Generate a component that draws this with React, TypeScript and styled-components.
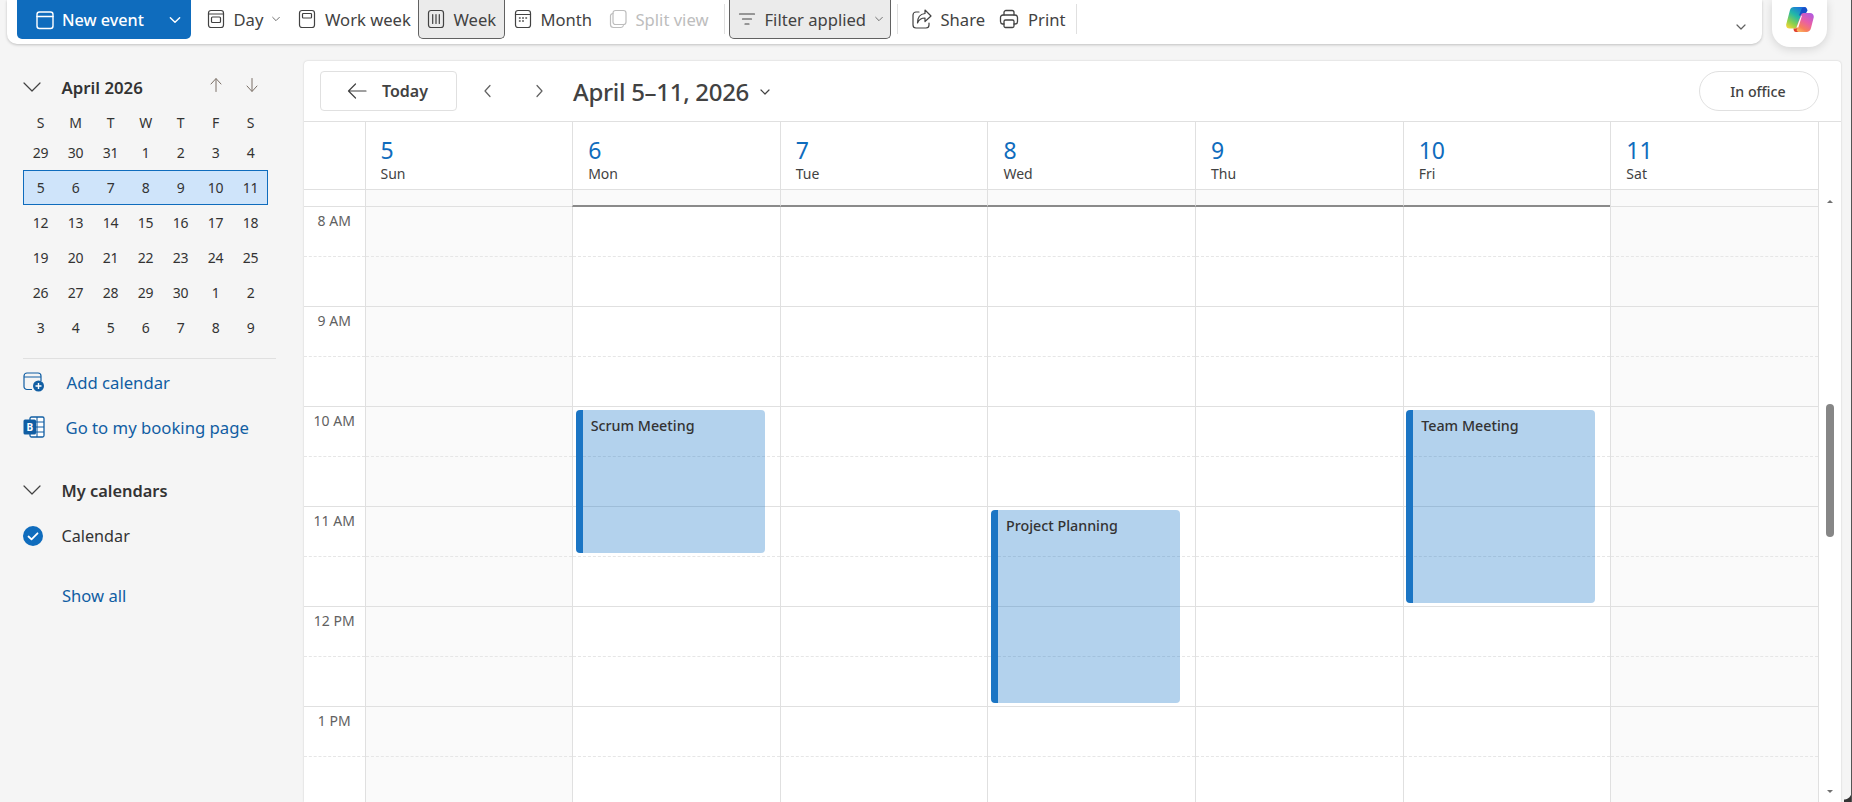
import React from "react";
import styled, { createGlobalStyle } from "styled-components";

const GlobalStyle = createGlobalStyle`
  html, body {
    margin: 0;
    height: 100%;
    overflow: hidden;
  }
  body {
    font-family: "Noto Sans", "Open Sans", sans-serif;
    color: #242424;
  }
  * {
    box-sizing: border-box;
  }
`;

type IconProps = { size?: number };

const stroke = { fill: "none", stroke: "currentColor", strokeWidth: 1.2, strokeLinecap: "round", strokeLinejoin: "round" } as const;

const ChevronDown = ({ size = 12 }: IconProps) => (
  <svg width={size} height={size} viewBox="0 0 12 12" {...stroke}>
    <path d="M2 4l4 4 4-4" />
  </svg>
);
const ChevronLeft = () => (
  <svg width="12" height="16" viewBox="0 0 12 16" {...stroke}>
    <path d="M8 2.5L3 8l5 5.5" />
  </svg>
);
const ChevronRight = () => (
  <svg width="12" height="16" viewBox="0 0 12 16" {...stroke}>
    <path d="M4 2.5L9 8l-5 5.5" />
  </svg>
);
const CalendarIcon = () => (
  <svg width="20" height="20" viewBox="0 0 20 20" {...stroke} strokeWidth={1.4}>
    <rect x="2" y="2" width="16" height="16.5" rx="2.5" />
    <path d="M2 6.5h16" />
  </svg>
);
const DayIcon = () => (
  <svg width="20" height="20" viewBox="0 0 20 20" {...stroke}>
    <rect x="2.5" y="1.5" width="15" height="17" rx="2.5" />
    <path d="M2.5 5h15" />
    <rect x="5.5" y="8" width="9" height="5.5" rx="1" />
  </svg>
);
const WorkWeekIcon = () => (
  <svg width="20" height="20" viewBox="0 0 20 20" {...stroke}>
    <rect x="2.5" y="1.5" width="15" height="17" rx="2.5" />
    <rect x="5.5" y="4.5" width="9" height="4.5" rx="0.8" />
  </svg>
);
const WeekIcon = () => (
  <svg width="20" height="20" viewBox="0 0 20 20" {...stroke}>
    <rect x="2.5" y="1.5" width="15" height="17" rx="2.5" />
    <path d="M6.7 5.5v9M10 5.5v9M13.3 5.5v9" />
  </svg>
);
const MonthIcon = () => (
  <svg width="20" height="20" viewBox="0 0 20 20" {...stroke}>
    <rect x="2.5" y="1.5" width="15" height="17" rx="2.5" />
    <path d="M2.5 5.5h15" />
    <path d="M6.5 9h.6M9.7 9h.6M12.9 9h.6M6.5 12h.6M9.7 12h.6" strokeWidth={1.5} />
  </svg>
);
const SplitIcon = () => (
  <svg width="20" height="20" viewBox="0 0 20 20" {...stroke}>
    <rect x="5" y="1.5" width="13" height="14" rx="2.5" />
    <path d="M5 4.5A2.5 2.5 0 0 0 2.5 7v8.5a3 3 0 0 0 3 3H13a2.5 2.5 0 0 0 2.4-2" />
  </svg>
);
const FilterIcon = () => (
  <svg width="20" height="20" viewBox="0 0 20 20" {...stroke}>
    <path d="M2.5 5h15M5.5 10h9M8 15h4" />
  </svg>
);
const ShareIcon = () => (
  <svg width="22" height="22" viewBox="0 0 22 22" {...stroke}>
    <path d="M8 4H5a3 3 0 0 0-3 3v10a3 3 0 0 0 3 3h10a3 3 0 0 0 3-3v-2" />
    <path d="M14 2l6 6-6 5.500V10c-3.500 0-6 1.500-7.500 5 0-5.500 3-9 7.500-9.500z" />
  </svg>
);
const PrintIcon = () => (
  <svg width="22" height="22" viewBox="0 0 22 22" {...stroke} strokeWidth={1.3}>
    <path d="M6 7V4.500A2 2 0 0 1 8 2.500h6a2 2 0 0 1 2 2V7" />
    <path d="M6 16H4.500a2.500 2.500 0 0 1-2-2.500V9.500A2.500 2.500 0 0 1 5 7h12a2.500 2.500 0 0 1 2.500 2.500v4A2.500 2.500 0 0 1 17 16h-1" />
    <rect x="6" y="12" width="10" height="7.500" rx="1.500" />
  </svg>
);
const ArrowUp = () => (
  <svg width="14" height="16" viewBox="0 0 14 16" {...stroke} strokeWidth={1}>
    <path d="M7 14.500V2M2 7l5-5.500L12 7" />
  </svg>
);
const ArrowDown = () => (
  <svg width="14" height="16" viewBox="0 0 14 16" {...stroke} strokeWidth={1}>
    <path d="M7 1.500V14M2 9l5 5.500L12 9" />
  </svg>
);
const ArrowLeft = () => (
  <svg width="20" height="16" viewBox="0 0 20 16" {...stroke}>
    <path d="M19 8H1.500M8.500 1L1.500 8l7 7" />
  </svg>
);
const LargeChevron = () => (
  <svg width="18" height="10" viewBox="0 0 18 10" {...stroke}>
    <path d="M1 1l8 8 8-8" />
  </svg>
);
const AddCalendarIcon = () => (
  <svg width="22" height="20" viewBox="0 0 22 20">
    <path d="M9 17.500H4a3 3 0 0 1-3-3V4a3 3 0 0 1 3-3h11a3 3 0 0 1 3 3v5M1 5h17" fill="none" stroke="#115ea3" strokeWidth="1.2" />
    <circle cx="15.500" cy="14" r="5.500" fill="#115ea3" />
    <path d="M15.500 11v6M12.500 14h6" stroke="#fff" strokeWidth="1.400" />
  </svg>
);
const BookingIcon = () => (
  <svg width="22" height="22" viewBox="0 0 22 22">
    <rect x="7" y="1" width="14" height="20" rx="1.500" fill="#fff" stroke="#115ea3" strokeWidth="1.300" />
    <path d="M14 1v20M7 6h14M7 11h14M7 16h14" stroke="#115ea3" strokeWidth="1.100" />
    <rect x="0.500" y="3.500" width="12.500" height="15" rx="1.500" fill="#115ea3" />
    <text x="3.500" y="15" fontSize="10" fontWeight="700" fill="#fff" fontFamily="Noto Sans, sans-serif">B</text>
  </svg>
);
const CheckCircle = () => (
  <svg width="20" height="20" viewBox="0 0 20 20">
    <circle cx="10" cy="10" r="10" fill="#0f6cbd" />
    <path d="M5.500 10.500l3 2.800 6-6" fill="none" stroke="#fff" strokeWidth="1.800" strokeLinecap="round" strokeLinejoin="round" />
  </svg>
);
const CopilotLogo = () => (
  <svg width="28" height="27" viewBox="0 0 28 27">
    <defs>
      <linearGradient id="cpLeft" x1="0.75" y1="0" x2="0.15" y2="1">
        <stop offset="0" stopColor="#1a6fe0" />
        <stop offset="0.4" stopColor="#22b8a8" />
        <stop offset="0.75" stopColor="#8fd14a" />
        <stop offset="1" stopColor="#f2d43a" />
      </linearGradient>
      <linearGradient id="cpRight" x1="0.85" y1="0" x2="0.25" y2="1">
        <stop offset="0" stopColor="#b05ae0" />
        <stop offset="0.45" stopColor="#e85ea8" />
        <stop offset="0.8" stopColor="#f8805a" />
        <stop offset="1" stopColor="#fbb45e" />
      </linearGradient>
    </defs>
    <path d="M8 1h9c2 0 3 1.500 2 3.500L13.500 20c-.7 2-2 2.500-4 2.500H3.500C1 22.500-.300 20.500.300 18L4 4C4.500 2 6 1 8 1z" fill="url(#cpLeft)" />
    <path d="M13 9.500l2-5c.800-2 1.500-3.500 4-3.500 1 0 2 1.500 2.500 3.500L19 9z" fill="#1650c8" />
    <path d="M17.500 7h6.500c2.500 0 4.200 2 3.700 4.500L25 22c-.500 2.500-2.500 4-4.500 4h-8c-2.500 0-3.500-1.500-2.700-3.500L15 9c.400-1.300 1.300-2 2.500-2z" fill="url(#cpRight)" />
    <path d="M10 26c-1.500 0-2.500-1-2.500-3.500h4L10.500 24c.500 1.500 2 2 2.500 2z" fill="#e0402e" />
    <path d="M16 9.500l-1 .500-4.500 11.500h1.800z" fill="#fff" />
  </svg>
);

const miniWeeks = [
  [29, 30, 31, 1, 2, 3, 4],
  [5, 6, 7, 8, 9, 10, 11],
  [12, 13, 14, 15, 16, 17, 18],
  [19, 20, 21, 22, 23, 24, 25],
  [26, 27, 28, 29, 30, 1, 2],
  [3, 4, 5, 6, 7, 8, 9],
];

const days = [
  { num: 5, name: "Sun", weekend: true, events: [] },
  { num: 6, name: "Mon", weekend: false, events: [{ title: "Scrum Meeting", top: 203, height: 143 }] },
  { num: 7, name: "Tue", weekend: false, events: [] },
  { num: 8, name: "Wed", weekend: false, events: [{ title: "Project Planning", top: 303, height: 193 }] },
  { num: 9, name: "Thu", weekend: false, events: [] },
  { num: 10, name: "Fri", weekend: false, events: [{ title: "Team Meeting", top: 203, height: 193 }] },
  { num: 11, name: "Sat", weekend: true, events: [] },
];

const hours = ["8 AM", "9 AM", "10 AM", "11 AM", "12 PM", "1 PM"];

const App = () => {
  return (
    <Page>
      <GlobalStyle />
      <TopRow>
        <Toolbar>
          <NewEvent>
            <CalendarIcon />
            <NewEventLabel>New event</NewEventLabel>
            <ChevronDown size={14} />
          </NewEvent>
          <ToolButton $width={91.5} $ml={7}>
            <DayIcon /> Day <SmallChevron><ChevronDown size={10} /></SmallChevron>
          </ToolButton>
          <ToolButton $width={128.5}>
            <WorkWeekIcon /> Work week
          </ToolButton>
          <ToolButton $width={87} $active>
            <WeekIcon /> Week
          </ToolButton>
          <ToolButton $width={95}>
            <MonthIcon /> Month
          </ToolButton>
          <ToolButton $width={121} $disabled>
            <SplitIcon /> Split view
          </ToolButton>
          <Separator />
          <ToolButton $width={161.5} $ml={1} $active>
            <FilterIcon /> Filter applied <SmallChevron><ChevronDown size={10} /></SmallChevron>
          </ToolButton>
          <Separator $ml={6} />
          <ToolButton $width={87.5} $ml={2.5}>
            <ShareIcon /> Share
          </ToolButton>
          <ToolButton $width={82}>
            <PrintIcon /> Print
          </ToolButton>
          <Separator />
          <Overflow>
            <ChevronDown size={12} />
          </Overflow>
        </Toolbar>
        <CopilotButton>
          <CopilotLogo />
        </CopilotButton>
      </TopRow>

      <Main>
        <Sidebar>
          <MonthHead>
            <ChevronSlot>
              <LargeChevron />
            </ChevronSlot>
            <MonthTitle>April 2026</MonthTitle>
            <MonthArrows>
              <ArrowUp />
              <ArrowDown />
            </MonthArrows>
          </MonthHead>
          <MiniWeek $head>
            {["S", "M", "T", "W", "T", "F", "S"].map((d, i) => (
              <MiniCell key={i}>{d}</MiniCell>
            ))}
          </MiniWeek>
          {miniWeeks.map((week, i) => (
            <MiniWeek key={i} $selected={i === 1}>
              {week.map((d, j) => (
                <MiniCell key={j}>{d}</MiniCell>
              ))}
            </MiniWeek>
          ))}
          <Divider />
          <SideLink>
            <LinkIcon>
              <AddCalendarIcon />
            </LinkIcon>
            Add calendar
          </SideLink>
          <SideLink $mt={9} $iconWidth={42.5}>
            <LinkIcon>
              <BookingIcon />
            </LinkIcon>
            Go to my booking page
          </SideLink>
          <GroupHead>
            <ChevronSlot>
              <LargeChevron />
            </ChevronSlot>
            My calendars
          </GroupHead>
          <CalendarRow>
            <ChevronSlot>
              <CheckCircle />
            </ChevronSlot>
            Calendar
          </CalendarRow>
          <ShowAll>Show all</ShowAll>
        </Sidebar>

        <Panel>
          <PanelHead>
            <TodayButton>
              <ArrowLeft />
              Today
            </TodayButton>
            <NavButton $ml={25}>
              <ChevronLeft />
            </NavButton>
            <NavButton $ml={39}>
              <ChevronRight />
            </NavButton>
            <RangeTitle>April 5–11, 2026</RangeTitle>
            <RangeChevron>
              <ChevronDown size={12} />
            </RangeChevron>
            <OfficeButton>In office</OfficeButton>
          </PanelHead>
          <PanelBody>
            <Grid>
              <DayHeadRow>
                <TimeHead />
                {days.map((d) => (
                  <DayHead key={d.num}>
                    <DayNumber>{d.num}</DayNumber>
                    <DayName>{d.name}</DayName>
                  </DayHead>
                ))}
              </DayHeadRow>
              <StripRow>
                <StripTime />
                {days.map((d) => (
                  <StripCell key={d.num} $weekend={d.weekend} />
                ))}
              </StripRow>
              <HoursRow>
                <TimeColumn>
                  {hours.map((h) => (
                    <HourCell key={h}>
                      <HalfHour>
                        <TimeLabel>{h}</TimeLabel>
                      </HalfHour>
                    </HourCell>
                  ))}
                </TimeColumn>
                {days.map((d) => (
                  <DayColumn key={d.num} $weekend={d.weekend}>
                    {hours.map((h) => (
                      <HourCell key={h}>
                        <HalfHour />
                      </HourCell>
                    ))}
                    {d.events.map((e) => (
                      <EventCard key={e.title} $top={e.top} $height={e.height}>
                        {e.title}
                      </EventCard>
                    ))}
                  </DayColumn>
                ))}
              </HoursRow>
            </Grid>
            <ScrollRail>
              <RailArrow $up />
              <ScrollThumb />
              <RailArrow />
            </ScrollRail>
          </PanelBody>
        </Panel>
      </Main>
      <WindowCorner />
    </Page>
  );
};

const Page = styled.div`
  position: relative;
  display: flex;
  flex-direction: column;
  height: 100vh;
  background: #f5f5f5;
  border-right: 1px solid #555;
  overflow: hidden;
`;
const WindowCorner = styled.div`
  position: absolute;
  right: -1px;
  bottom: 0;
  width: 8px;
  height: 10px;
  background: radial-gradient(circle at 0 0, transparent 7px, #333 8px);
`;
const TopRow = styled.div`
  display: flex;
  align-items: flex-start;
  height: 44px;
  padding-left: 7px;
  flex: none;
`;
const Toolbar = styled.div`
  display: flex;
  align-items: flex-start;
  width: 1755px;
  height: 44px;
  padding-left: 10px;
  background: #fff;
  border-radius: 0 0 10px 10px;
  box-shadow: 0 1px 3px rgba(0, 0, 0, 0.22);
  color: #424242;
`;
const NewEvent = styled.button`
  display: flex;
  align-items: center;
  width: 174px;
  height: 39px;
  padding: 0 9px 0 18px;
  border: none;
  border-radius: 0 0 5px 5px;
  background: #0f6cbd;
  color: #fff;
  font: 500 16.2px "Noto Sans", sans-serif;
`;
const NewEventLabel = styled.span`
  margin: 0 auto 0 7px;
`;
const ToolButton = styled.div<{ $width: number; $active?: boolean; $disabled?: boolean; $ml?: number }>`
  display: flex;
  align-items: center;
  gap: 8px;
  flex: none;
  width: ${(p) => p.$width}px;
  height: 39px;
  margin-left: ${(p) => p.$ml ?? 0}px;
  padding-left: 6.5px;
  font-size: 16.6px;
  white-space: nowrap;
  color: ${(p) => (p.$disabled ? "#bdbdbd" : "#424242")};
  background: ${(p) => (p.$active ? "#ebebeb" : "transparent")};
  border: 1px solid ${(p) => (p.$active ? "#616161" : "transparent")};
  border-top: none;
  border-radius: 0 0 5px 5px;
  svg {
    flex: none;
  }
`;
const SmallChevron = styled.span`
  display: flex;
  color: #707070;
`;
const Separator = styled.div<{ $ml?: number }>`
  flex: none;
  width: 1px;
  height: 30px;
  margin: 4px 3px 0 ${(p) => p.$ml ?? 3}px;
  background: #e0e0e0;
`;
const Overflow = styled.div`
  display: flex;
  margin: 21px 15px 0 auto;
  color: #616161;
`;
const CopilotButton = styled.div`
  display: flex;
  align-items: center;
  justify-content: center;
  flex: none;
  width: 55px;
  height: 47px;
  margin-left: 10px;
  padding: 6px 0 14px;
  background: #fff;
  border-radius: 0 0 18px 18px;
  box-shadow: 0 2px 10px rgba(0, 0, 0, 0.14);
`;
const Main = styled.div`
  display: flex;
  flex: 1;
  min-height: 0;
  padding-right: 10px;
`;
const Sidebar = styled.div`
  display: flex;
  flex-direction: column;
  flex: none;
  width: 304px;
  padding: 28px 0 0 23px;
  font-size: 14px;
  color: #333;
`;
const MonthHead = styled.div`
  display: flex;
  align-items: center;
  height: 30px;
  margin-bottom: 7px;
`;
const ChevronSlot = styled.div`
  display: flex;
  flex: none;
  width: 38.5px;
  color: #424242;
`;
const MonthTitle = styled.div`
  font-size: 16.8px;
  font-weight: 600;
  color: #333;
`;
const MonthArrows = styled.div`
  display: flex;
  gap: 22px;
  margin: -4px 0 0 66px;
  color: #7a6f66;
`;
const MiniWeek = styled.div<{ $selected?: boolean; $head?: boolean }>`
  display: grid;
  grid-template-columns: repeat(7, 35px);
  width: 245px;
  height: ${(p) => (p.$head ? "26px" : "35px")};
  background: ${(p) => (p.$selected ? "#cfe4fa" : "transparent")};
  outline: ${(p) => (p.$selected ? "1px solid #0f6cbd" : "none")};
  outline-offset: -1px;
`;
const MiniCell = styled.div`
  display: flex;
  align-items: center;
  justify-content: center;
  font-size: 14px;
  letter-spacing: -0.3px;
`;
const Divider = styled.div`
  width: 253px;
  height: 1px;
  margin-top: 13px;
  background: #e0e0e0;
`;
const LinkIcon = styled.div`
  display: flex;
  flex: none;
  width: 43.5px;
`;
const SideLink = styled.div<{ $mt?: number; $iconWidth?: number }>`
  display: flex;
  align-items: center;
  height: 36px;
  margin-top: ${(p) => p.$mt ?? 5}px;
  font-size: 16.7px;
  color: #115ea3;
  ${LinkIcon} {
    width: ${(p) => p.$iconWidth ?? 43.5}px;
  }
`;
const GroupHead = styled.div`
  display: flex;
  align-items: center;
  height: 36px;
  margin-top: 27px;
  font-size: 16.4px;
  font-weight: 600;
  color: #333;
`;
const CalendarRow = styled.div`
  display: flex;
  align-items: center;
  height: 36px;
  margin-top: 10px;
  font-size: 16.2px;
  color: #333;
`;
const ShowAll = styled.div`
  height: 36px;
  margin: 24px 0 0 39px;
  line-height: 36px;
  font-size: 16.6px;
  color: #115ea3;
`;
const Panel = styled.div`
  display: flex;
  flex-direction: column;
  flex: 1;
  min-width: 0;
  margin-top: 17px;
  background: #fff;
  border-radius: 4px 4px 0 0;
  box-shadow: 0 0 2px rgba(0, 0, 0, 0.2);
`;
const PanelHead = styled.div`
  display: flex;
  align-items: center;
  flex: none;
  height: 61px;
  padding: 0 22px 0 16px;
  border-bottom: 1px solid #e0e0e0;
  color: #424242;
`;
const TodayButton = styled.div`
  display: flex;
  align-items: center;
  gap: 15px;
  width: 137px;
  height: 40px;
  padding-left: 26px;
  border: 1px solid #e0e0e0;
  border-radius: 4px;
  font-size: 16px;
  font-weight: 600;
`;
const NavButton = styled.div<{ $ml: number }>`
  display: flex;
  margin-left: ${(p) => p.$ml}px;
  color: #616161;
`;
const RangeTitle = styled.div`
  margin-left: 28px;
  font-size: 24px;
  font-weight: 500;
  letter-spacing: -0.3px;
  color: #424242;
`;
const RangeChevron = styled.div`
  display: flex;
  margin: 2px 0 0 10px;
`;
const OfficeButton = styled.div`
  display: flex;
  align-items: center;
  justify-content: center;
  width: 120px;
  height: 40px;
  margin-left: auto;
  padding-right: 2px;
  border: 1px solid #e0e0e0;
  border-radius: 20px;
  font-size: 14.2px;
  font-weight: 500;
`;
const PanelBody = styled.div`
  display: flex;
  flex: 1;
  min-height: 0;
  overflow: hidden;
`;
const Grid = styled.div`
  display: flex;
  flex-direction: column;
  flex: 1;
  min-width: 0;
`;
const DayHeadRow = styled.div`
  display: grid;
  grid-template-columns: 60.5px repeat(7, 1fr);
  height: 68px;
  flex: none;
  border-bottom: 1px solid #e0e0e0;
`;
const TimeHead = styled.div``;
const DayHead = styled.div`
  display: flex;
  flex-direction: column;
  padding: 11px 0 0 15px;
  border-left: 1px solid #e0e0e0;
`;
const DayNumber = styled.div`
  height: 32px;
  font-size: 23px;
  line-height: 34px;
  color: #0f6cbd;
`;
const DayName = styled.div`
  font-size: 14px;
  line-height: 18px;
  color: #424242;
`;
const StripRow = styled.div`
  display: grid;
  grid-template-columns: 60.5px repeat(7, 1fr);
  height: 17px;
  flex: none;
`;
const StripTime = styled.div`
  border-bottom: 1px solid #e0e0e0;
`;
const StripCell = styled.div<{ $weekend: boolean }>`
  background: #fafafa;
  border-left: 1px solid #e0e0e0;
  border-bottom: ${(p) => (p.$weekend ? "1px solid #e0e0e0" : "2px solid #8a8a8a")};
`;
const HoursRow = styled.div`
  display: grid;
  grid-template-columns: 60.5px repeat(7, 1fr);
  flex: 1;
  min-height: 0;
`;
const TimeColumn = styled.div``;
const DayColumn = styled.div<{ $weekend: boolean }>`
  position: relative;
  background: ${(p) => (p.$weekend ? "#fafafa" : "#fff")};
  border-left: 1px solid #e0e0e0;
`;
const HourCell = styled.div`
  height: 100px;
  border-bottom: 1px solid #e0e0e0;
`;
const HalfHour = styled.div`
  height: 50px;
  border-bottom: 1px dashed #e6e6e6;
`;
const TimeLabel = styled.div`
  padding-top: 4px;
  font-size: 14px;
  line-height: 19px;
  text-align: center;
  color: #616161;
`;
const EventCard = styled.div<{ $top: number; $height: number }>`
  position: absolute;
  top: ${(p) => p.$top}px;
  left: 2.5px;
  width: 189px;
  height: ${(p) => p.$height}px;
  padding: 6px 0 0 8px;
  border-left: 7px solid #1b75c4;
  border-radius: 4px;
  background: rgba(20, 115, 200, 0.32);
  font-size: 14.3px;
  font-weight: 500;
  line-height: 20px;
  color: #333;
`;
const ScrollRail = styled.div`
  display: flex;
  flex-direction: column;
  align-items: center;
  flex: none;
  width: 23px;
  border-left: 1px solid #e0e0e0;
`;
const RailArrow = styled.div<{ $up?: boolean }>`
  flex: none;
  width: 0;
  height: 0;
  margin-top: ${(p) => (p.$up ? "78px" : "253px")};
  border-left: 3.5px solid transparent;
  border-right: 3.5px solid transparent;
  border-bottom: ${(p) => (p.$up ? "3px solid #707070" : "none")};
  border-top: ${(p) => (p.$up ? "none" : "3px solid #707070")};
`;
const ScrollThumb = styled.div`
  flex: none;
  width: 8px;
  height: 133px;
  margin-top: 201px;
  border-radius: 4px;
  background: #868686;
`;

export default App;
